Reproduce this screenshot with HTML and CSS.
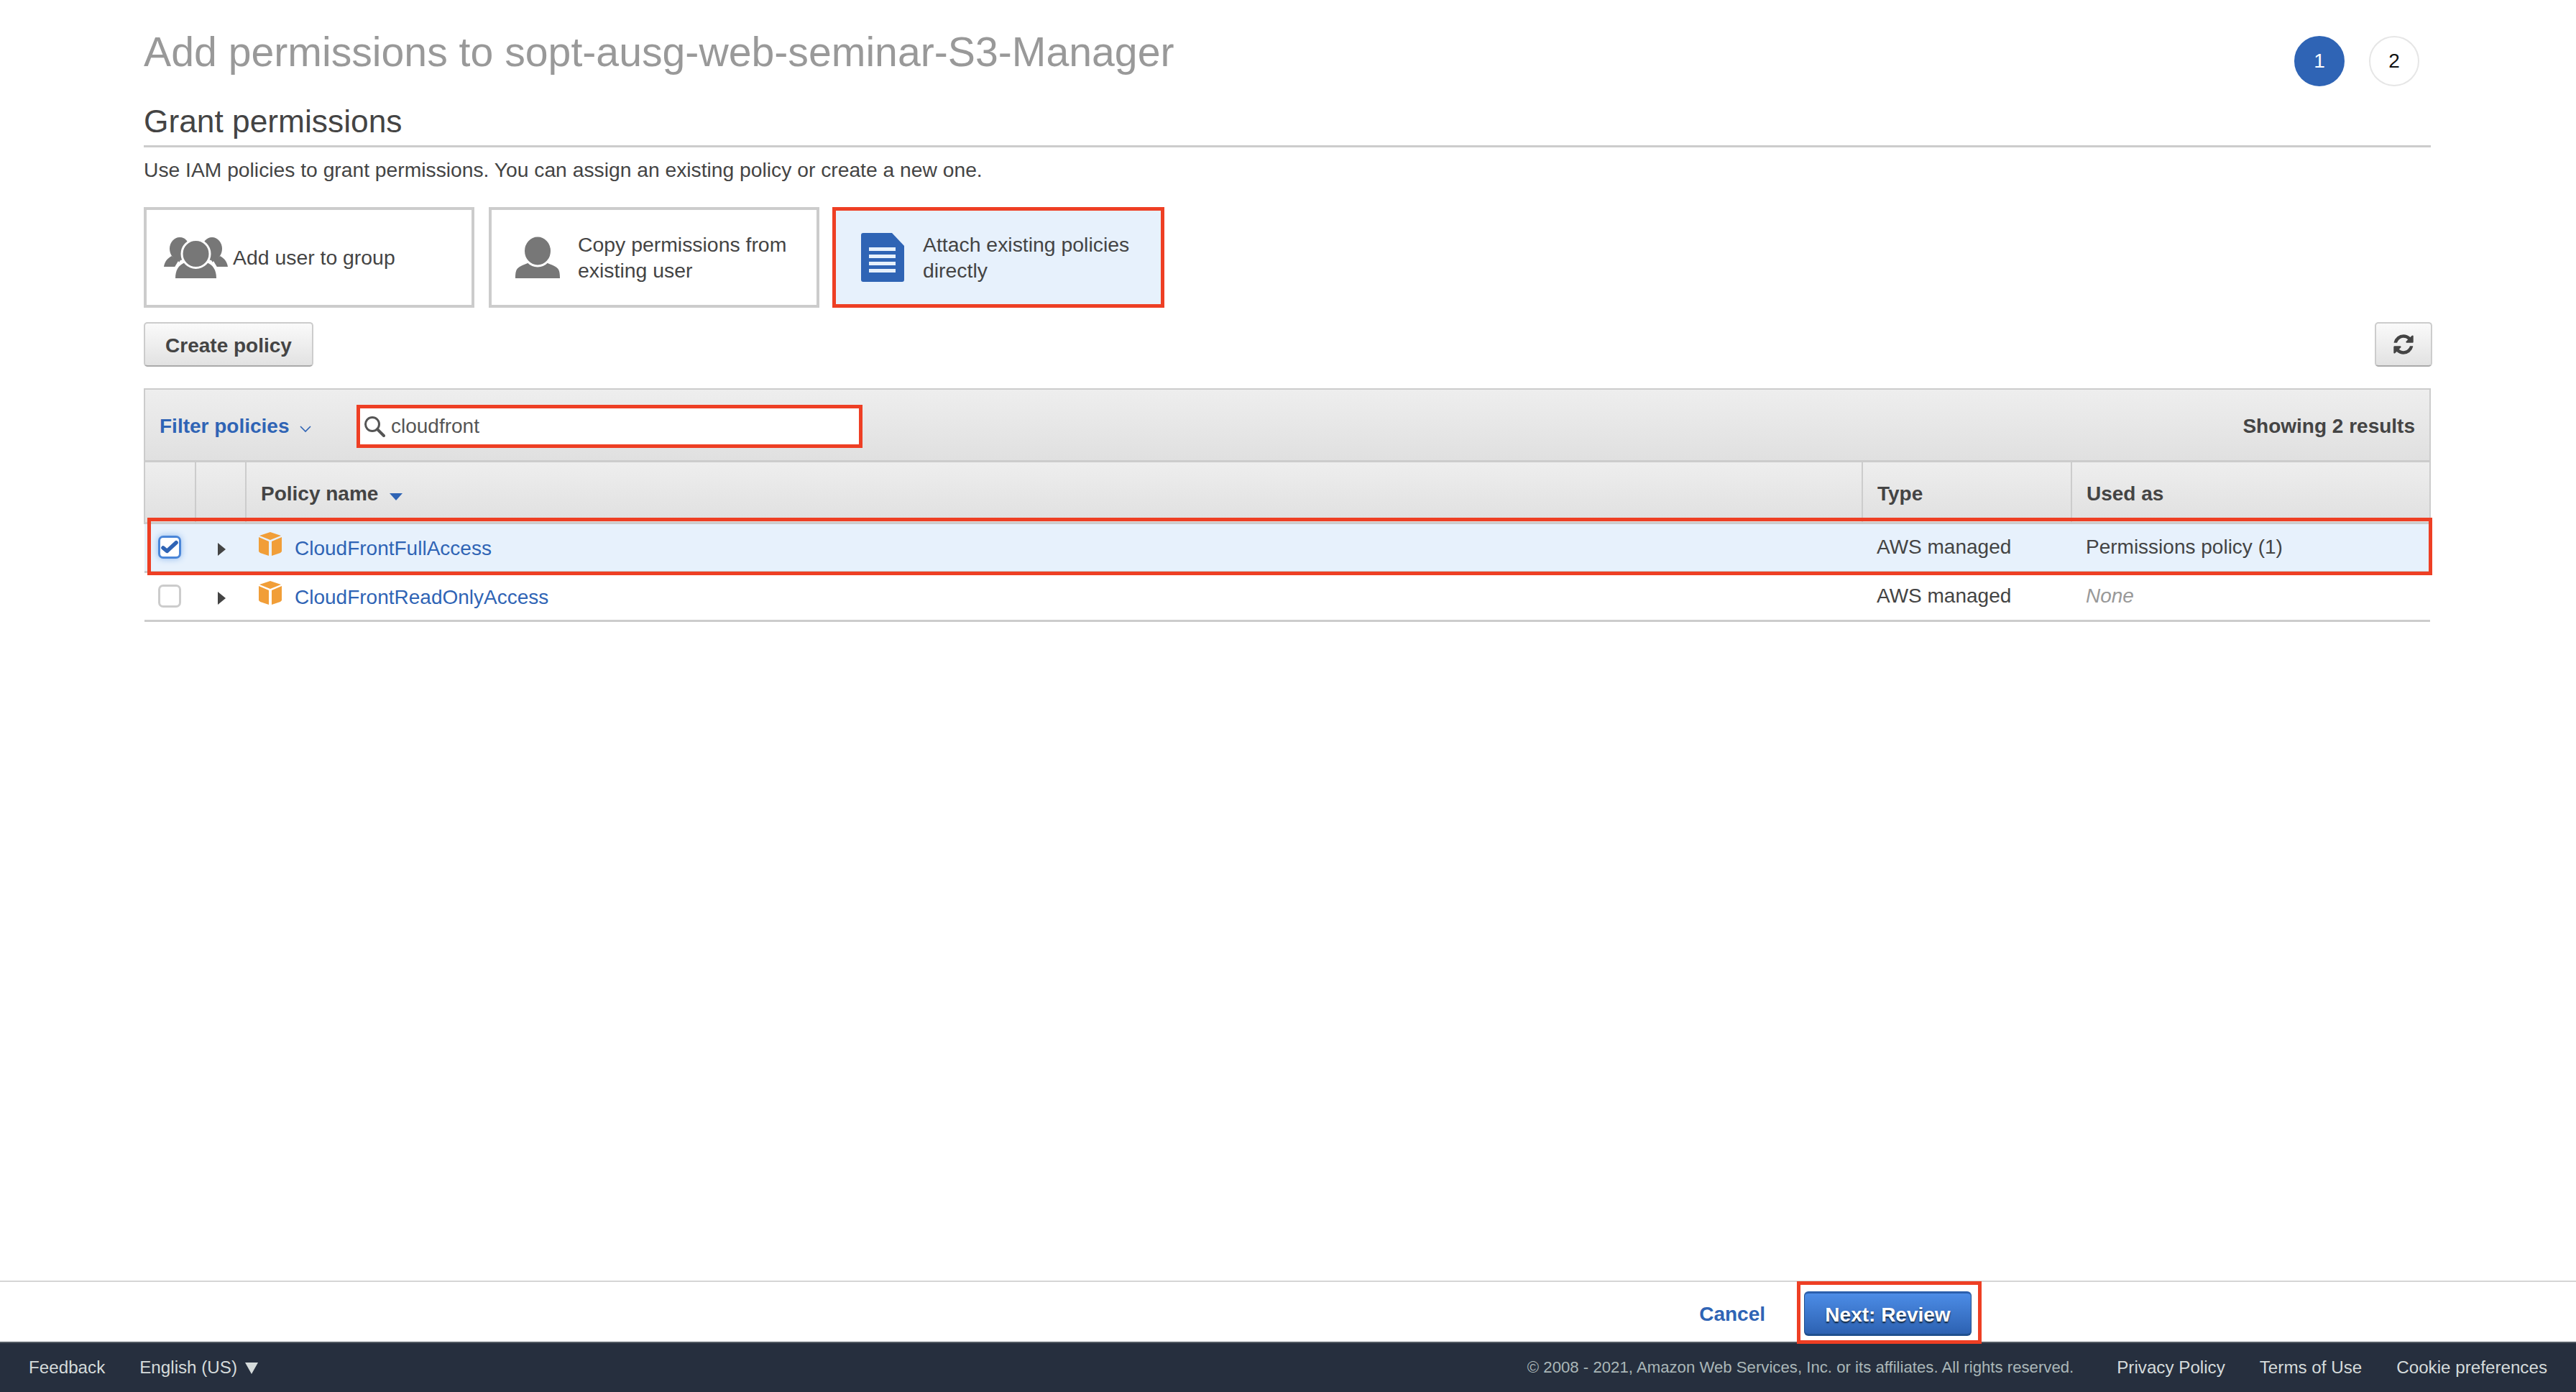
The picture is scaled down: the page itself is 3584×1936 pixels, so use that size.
FILE: index.html
```html
<!DOCTYPE html>
<html lang="en">

<head>
    <meta charset="UTF-8">
    <title>Add permissions</title>
    <link rel="stylesheet" href="styles.css">
</head>

<body>
    <main class="main">
        <div class="title-row">
            <h1 class="title">Add permissions to sopt-ausg-web-seminar-S3-Manager</h1>
            <div class="steps">
                <span class="step step-on">1</span>
                <span class="step">2</span>
            </div>
        </div>

        <h2 class="section-title">Grant permissions</h2>
        <p class="intro">Use IAM policies to grant permissions. You can assign an existing policy or create a new one.</p>

        <div class="cards">
            <div class="card">
                <svg class="icon-group" viewBox="0 0 89 57">
                    <ellipse cx="22" cy="16" rx="14" ry="16" fill="#777"/>
                    <ellipse cx="67" cy="16" rx="14" ry="16" fill="#777"/>
                    <path d="M0 41c1-7 5-12 11-15 3 3 7 5 12 6l-6 9z" fill="#777"/>
                    <path d="M89 41c-1-7-5-12-11-15-3 3-7 5-12 6l6 9z" fill="#777"/>
                    <path d="M14 43l6-10 6 10zM75 43l-6-10-6 10z" fill="#fff"/>
                    <path d="M16 57c0-12 5-19 14-22h29c9 3 14 10 14 22z" fill="#777"/>
                    <circle cx="44.500" cy="23" r="19.500" fill="#777" stroke="#fff" stroke-width="3"/>
                </svg>
                <span class="card-text">Add user to group</span>
            </div>
            <div class="card">
                <svg class="icon-user" viewBox="0 0 62 58">
                    <path d="M0 58c0-9 1-13 6-16 5-3 10-4 15-7h20c5 3 10 4 15 7 5 3 6 7 6 16z" fill="#777"/>
                    <ellipse cx="31" cy="20" rx="19.500" ry="21" fill="#777" stroke="#fff" stroke-width="3"/>
                </svg>
                <span class="card-text">Copy permissions from<br>existing user</span>
            </div>
            <div class="card card-on">
                <svg class="icon-doc" viewBox="0 0 60 68">
                    <path d="M3 0h40l17 18v47a3 3 0 0 1-3 3H3a3 3 0 0 1-3-3V3a3 3 0 0 1 3-3z" fill="#2f64b5"/>
                    <rect x="11" y="20" width="37" height="5" fill="#e7f1fc"/>
                    <rect x="11" y="30" width="37" height="5" fill="#e7f1fc"/>
                    <rect x="11" y="40" width="37" height="5" fill="#e7f1fc"/>
                    <rect x="11" y="50" width="37" height="5" fill="#e7f1fc"/>
                </svg>
                <span class="card-text">Attach existing policies<br>directly</span>
                <span class="mark mark-card"></span>
            </div>
        </div>

        <div class="toolbar">
            <button class="btn btn-create">Create policy</button>
            <button class="btn btn-refresh">
                <svg class="icon-refresh" viewBox="0 0 1792 1792">
                    <path d="M1639 1056q0 5-1 7-64 268-268 434.5t-478 166.5q-146 0-282.5-55t-243.5-157l-129 129q-19 19-45 19t-45-19-19-45v-448q0-26 19-45t45-19h448q26 0 45 19t19 45-19 45l-137 137q71 66 161 102t187 36q134 0 250-65t186-179q11-17 53-117 8-23 30-23h192q13 0 22.5 9.5t9.5 22.5zm25-800v448q0 26-19 45t-45 19h-448q-26 0-45-19t-19-45 19-45l138-138q-148-137-349-137-134 0-250 65t-186 179q-11 17-53 117-8 23-30 23h-199q-13 0-22.5-9.5t-9.5-22.5v-7q65-268 270-434.5t480-166.5q146 0 284 55.5t245 156.5l130-129q19-19 45-19t45 19 19 45z" fill="#444"/>
                </svg>
            </button>
        </div>

        <div class="filter-bar">
            <a class="filter-link">Filter policies
                <svg class="icon-chevron" viewBox="0 0 16 10"><path d="M1 1l7 7 7-7" fill="none" stroke="#2f64b5" stroke-width="1.6"/></svg>
            </a>
            <div class="search">
                <svg class="icon-search" viewBox="0 0 30 30">
                    <circle cx="12" cy="12" r="9.500" fill="none" stroke="#555" stroke-width="3"/>
                    <path d="M19 19l9 9" stroke="#555" stroke-width="4" stroke-linecap="round"/>
                </svg>
                <span>cloudfront</span>
                <span class="mark mark-search"></span>
            </div>
            <span class="results">Showing 2 results</span>
        </div>

        <table class="policies">
            <colgroup>
                <col class="col-check">
                <col class="col-arrow">
                <col class="col-name">
                <col class="col-type">
                <col>
            </colgroup>
            <thead>
                <tr>
                    <th></th>
                    <th></th>
                    <th>Policy name <span class="sort"></span></th>
                    <th>Type</th>
                    <th>Used as</th>
                </tr>
            </thead>
            <tbody>
                <tr class="row-on">
                    <td class="cell-mark">
                        <span class="check check-on">
                            <svg viewBox="0 0 26 22"><path d="M3 12l6 5L23 4" fill="none" stroke="#2f64b5" stroke-width="6" stroke-linecap="round" stroke-linejoin="round"/></svg>
                        </span>
                        <span class="mark mark-row"></span>
                    </td>
                    <td><span class="caret"></span></td>
                    <td>
                        <div class="name-cell">
                            <svg class="icon-cube" viewBox="0 0 32 33">
                                <path d="M16 0l15 5-15 6L1 5z" fill="#f19e38"/>
                                <path d="M0 7l14 6v20L2 29l-2-2z" fill="#f19e38"/>
                                <path d="M32 7l-14 6v20l12-4 2-2z" fill="#f19e38"/>
                            </svg>
                            <a class="policy-link">CloudFrontFullAccess</a>
                        </div>
                    </td>
                    <td>AWS managed</td>
                    <td>Permissions policy (1)</td>
                </tr>
                <tr>
                    <td><span class="check"></span></td>
                    <td><span class="caret"></span></td>
                    <td>
                        <div class="name-cell">
                            <svg class="icon-cube" viewBox="0 0 32 33">
                                <path d="M16 0l15 5-15 6L1 5z" fill="#f19e38"/>
                                <path d="M0 7l14 6v20L2 29l-2-2z" fill="#f19e38"/>
                                <path d="M32 7l-14 6v20l12-4 2-2z" fill="#f19e38"/>
                            </svg>
                            <a class="policy-link">CloudFrontReadOnlyAccess</a>
                        </div>
                    </td>
                    <td>AWS managed</td>
                    <td class="none">None</td>
                </tr>
            </tbody>
        </table>
    </main>

    <div class="actions">
        <a class="cancel">Cancel</a>
        <div class="next-wrap">
            <button class="btn-next">Next: Review</button>
            <span class="mark mark-next"></span>
        </div>
    </div>

    <footer class="footer">
        <a class="foot-link">Feedback</a>
        <a class="foot-link foot-lang">English (US) <span class="lang-arrow"></span></a>
        <span class="copyright">© 2008 - 2021, Amazon Web Services, Inc. or its affiliates. All rights reserved.</span>
        <a class="foot-link foot-right">Privacy Policy</a>
        <a class="foot-link foot-right">Terms of Use</a>
        <a class="foot-link foot-right">Cookie preferences</a>
    </footer>
</body>

</html>
```

FILE: styles.css
```css
* {
    margin: 0;
    padding: 0;
    box-sizing: border-box;
}

body {
    width: 3584px;
    height: 1936px;
    display: flex;
    flex-direction: column;
    overflow: hidden;
    background-color: #fff;
    color: #444;
    font-family: "Liberation Sans", Arial, sans-serif;
    font-size: 28px;
}

/* red annotation boxes sit on top of the page */
.mark {
    position: absolute;
    border: 5px solid #ee3f24;
    pointer-events: none;
}

.main {
    flex: 1;
    padding: 0 202px 0 200px;
}

.title-row {
    display: flex;
    justify-content: space-between;
    height: 130px;
    padding-top: 36px;
}

.title {
    font-size: 57.2px;
    font-weight: 400;
    line-height: 72px;
    color: #999;
}

.steps {
    display: flex;
    gap: 34px;
    margin: 14px 16px 0 0;
}

.step {
    width: 70px;
    height: 70px;
    display: flex;
    align-items: center;
    justify-content: center;
    border: 2px solid #e6e6e6;
    border-radius: 50%;
    font-size: 28px;
    color: #111;
}

.step-on {
    background-color: #2f64b5;
    border-color: #2f64b5;
    color: #fff;
}

.section-title {
    height: 75px;
    padding-top: 14px;
    border-bottom: 3px solid #ccc;
    font-size: 44.3px;
    font-weight: 400;
    line-height: 50px;
    color: #444;
}

.intro {
    height: 83px;
    padding-top: 15px;
    font-size: 28.25px;
    line-height: 32px;
}

.cards {
    display: flex;
    gap: 20px;
}

.card {
    position: relative;
    width: 460px;
    height: 140px;
    display: flex;
    align-items: center;
    padding-left: 24px;
    border: 4px solid #ccc;
    font-size: 28.4px;
    line-height: 36px;
}

.card-on {
    width: 462px;
    margin-left: -2px;
    background-color: #e7f1fc;
    border-color: transparent;
}

.card-text {
    color: #444;
}

.icon-group {
    width: 89px;
    height: 57px;
    margin-right: 7px;
}

.icon-user {
    width: 62px;
    height: 58px;
    margin: 0 25px 0 9px;
}

.icon-doc {
    width: 60px;
    height: 68px;
    margin: 0 26px 0 12px;
}

.mark-card {
    inset: -4px;
}

.toolbar {
    display: flex;
    justify-content: space-between;
    height: 112px;
    padding-top: 20px;
}

.btn {
    height: 62px;
    border: 2px solid #ccc;
    border-bottom-color: #aaa;
    border-radius: 5px;
    background: linear-gradient(#fafafa, #e2e2e2);
    color: #444;
    font-family: inherit;
    font-size: 28px;
    font-weight: 700;
}

.btn-create {
    width: 236px;
    padding-top: 4px;
}

.btn-refresh {
    width: 80px;
    display: flex;
    align-items: center;
    justify-content: center;
    margin-right: -2px;
}

.icon-refresh {
    width: 32px;
    height: 32px;
}

.filter-bar {
    display: flex;
    align-items: center;
    height: 103px;
    padding: 3px 20px 0;
    border: 2px solid #ccc;
    border-bottom-width: 3px;
    background: linear-gradient(#eee, #e0e0e0);
}

.filter-link {
    width: 276px;
    color: #2f64b5;
    font-weight: 700;
}

.icon-chevron {
    width: 16px;
    height: 10px;
    margin-left: 7px;
}

.search {
    position: relative;
    width: 700px;
    height: 56px;
    display: flex;
    align-items: center;
    gap: 8px;
    padding-left: 8px;
    background-color: #fff;
    color: #555;
}

.icon-search {
    width: 30px;
    height: 30px;
}

.mark-search {
    inset: -2px;
}

.results {
    margin-left: auto;
    font-weight: 700;
}

.policies {
    width: 100%;
    border-collapse: collapse;
    table-layout: fixed;
}

.col-check {
    width: 71px;
}

.col-arrow {
    width: 70px;
}

.col-name {
    width: 2249px;
}

.col-type {
    width: 291px;
}

.policies th {
    height: 84px;
    padding: 6px 20px 0;
    border-left: 2px solid #ccc;
    border-right: 2px solid #ccc;
    border-bottom: 3px solid #ccc;
    background: linear-gradient(#eee, #e0e0e0);
    text-align: left;
    font-size: 28px;
}

.policies td {
    height: 68px;
    padding: 0 20px;
    white-space: nowrap;
}

.policies td:first-child {
    padding-left: 19px;
}

.policies tbody tr {
    border-bottom: 3px solid #ccc;
}

.row-on td {
    background-color: #e7f1fc;
}

.cell-mark {
    position: relative;
}

.mark-row {
    top: -9px;
    left: 4px;
    width: 3179px;
    height: 80px;
}

.sort {
    display: inline-block;
    margin-left: 8px;
    border-top: 10px solid #2f64b5;
    border-left: 9px solid transparent;
    border-right: 9px solid transparent;
}

.check {
    display: flex;
    align-items: center;
    justify-content: center;
    width: 32px;
    height: 32px;
    border: 3px solid #ccc;
    border-radius: 7px;
    background-color: #fff;
}

.check-on {
    border-color: #4a86d8;
    box-shadow: 0 0 10px #8db8ee;
}

.check svg {
    width: 24px;
    height: 20px;
}

.caret {
    display: block;
    width: 11px;
    margin-left: 11px;
    margin-top: 6px;
    border-left: 11px solid #444;
    border-top: 9px solid transparent;
    border-bottom: 9px solid transparent;
}

.name-cell {
    display: flex;
    align-items: center;
    gap: 18px;
    margin-left: -2px;
}

.icon-cube {
    width: 32px;
    height: 33px;
    margin-top: -10px;
}

.policy-link {
    padding-top: 4px;
    color: #2f64b5;
}

.none {
    color: #999;
    font-style: italic;
}

.actions {
    height: 85px;
    display: flex;
    align-items: center;
    justify-content: flex-end;
    padding: 0 841px 0 0;
    border-top: 2px solid #d5d5d5;
}

.cancel {
    margin: 6px 54px 0 0;
    color: #2f64b5;
    font-weight: 700;
}

.next-wrap {
    position: relative;
    height: 62px;
    margin-top: 5px;
}

.btn-next {
    width: 233px;
    height: 62px;
    padding-top: 3px;
    border: 1px solid #20508f;
    border-top: 3px solid #2b5fad;
    border-bottom: 3px solid #20508f;
    border-radius: 6px;
    background: linear-gradient(#4c8ce6, #2d62b2);
    color: #fff;
    font-family: inherit;
    font-size: 28px;
    font-weight: 700;
    text-shadow: 0 2px 2px #123;
}

.mark-next {
    top: -14px;
    left: -10px;
    width: 257px;
    height: 87px;
}

.footer {
    height: 70px;
    display: flex;
    align-items: center;
    padding: 0 40px;
    border-top: 2px solid #545b64;
    background-color: #262f3e;
    font-size: 24.2px;
    color: #d5dbdb;
}

.foot-lang {
    margin-left: 48px;
}

.lang-arrow {
    display: inline-block;
    margin-left: 4px;
    border-top: 16px solid #d5dbdb;
    border-left: 9px solid transparent;
    border-right: 9px solid transparent;
    vertical-align: -1px;
}

.copyright {
    margin-left: auto;
    margin-right: 12px;
    font-size: 22.2px;
    color: #aab7b8;
}

.foot-right {
    margin-left: 48px;
}
```
